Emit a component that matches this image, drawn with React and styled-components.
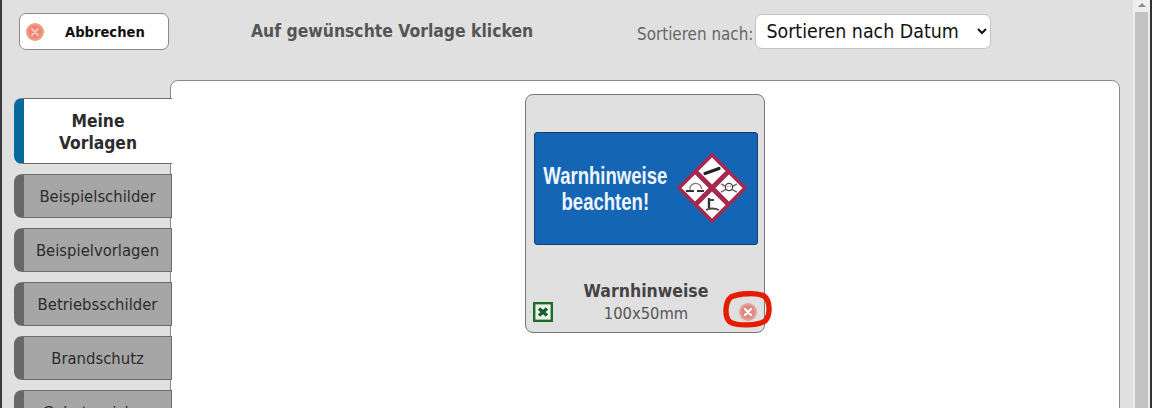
import React from "react";
import styled, { createGlobalStyle } from "styled-components";

const GlobalStyle = createGlobalStyle`
    html, body {
        margin: 0;
        height: 408px;
        overflow: hidden;
        background: #e0e0e0;
    }
    * {
        box-sizing: border-box;
    }
`;

const font = `"DejaVu Sans Condensed", "DejaVu Sans", sans-serif`;

const Window = styled.div`
    display: flex;
    width: 1152px;
    height: 408px;
    overflow: hidden;
    border-left: 2px solid #3a3a3a;
    border-right: 2px solid #2c3238;
    background: #e0e0e0;
    font-family: ${font};
`;

const Main = styled.div`
    flex: 1;
    min-width: 0;
    padding: 13px 0 0 12px;
`;

const Toolbar = styled.div`
    display: flex;
    align-items: flex-start;
    height: 67px;
`;

const CancelButton = styled.button`
    display: flex;
    align-items: center;
    width: 150px;
    height: 37px;
    margin-left: 5px;
    padding: 0 0 0 5px;
    background: #fff;
    border: 1px solid #8a8a8a;
    border-radius: 7px;
    color: #111;
    font-family: ${font};
    font-size: 14.6px;
    font-weight: 700;
`;

const CancelLabel = styled.span`
    margin-left: 20px;
`;

const Title = styled.div`
    margin: 8px 0 0 82px;
    width: 386px;
    color: #555;
    font-size: 17.4px;
    font-weight: 700;
`;

const SortLabel = styled.label`
    margin-top: 11px;
    color: #666;
    font-size: 16.9px;
`;

const SortSelect = styled.select`
    width: 236px;
    height: 35px;
    margin: 1px 0 0 2px;
    padding: 0 0 0 6px;
    background: #fff;
    border: 1px solid #c4c4c4;
    border-radius: 7px;
    color: #111;
    font-family: ${font};
    font-size: 19.4px;
`;

const Content = styled.div`
    display: flex;
    align-items: flex-start;
`;

const Tabs = styled.div`
    position: relative;
    z-index: 1;
    display: flex;
    flex-direction: column;
    gap: 10px;
    width: 158px;
    margin-right: -2px;
    padding-top: 18px;
    flex-shrink: 0;
`;

const Tab = styled.div`
    display: flex;
    align-items: center;
    justify-content: center;
    height: ${(p) => (p.$active ? "66px" : "44px")};
    padding: 2px 6px 0;
    background: ${(p) => (p.$active ? "#fff" : "#a6a6a6")};
    border: 1px solid #6c6c6c;
    border-left: 10px solid ${(p) => (p.$active ? "#06699c" : "#686868")};
    border-right: ${(p) => (p.$active ? "none" : "1px solid #6c6c6c")};
    border-radius: 8px 0 0 8px;
    color: #2c2c2c;
    font-size: ${(p) => (p.$active ? "17.3px" : "16.5px")};
    font-weight: ${(p) => (p.$active ? 700 : 400)};
    line-height: 22px;
    text-align: center;
    flex-shrink: 0;
`;

const Panel = styled.div`
    display: flex;
    justify-content: center;
    align-items: flex-start;
    width: 950px;
    height: 400px;
    padding-top: 13px;
    background: #fff;
    border: 1px solid #8a8a8a;
    border-radius: 8px 8px 0 0;
`;

const Card = styled.div`
    position: relative;
    display: flex;
    flex-direction: column;
    align-items: center;
    width: 240px;
    height: 239px;
    padding: 37px 6px 0 8px;
    background: #e0e0e0;
    border: 1px solid #777;
    border-radius: 8px;
`;

const Sign = styled.div`
    display: flex;
    align-items: center;
    width: 224px;
    height: 113px;
    padding: 0 0 2px 7px;
    background: #1565b5;
    border: 1px solid #123f70;
    border-radius: 3px;
`;

const SignText = styled.div`
    width: 164px;
    margin-right: -33px;
    padding-top: 2px;
    color: #eef6fb;
    font-family: "Liberation Sans", sans-serif;
    font-size: 24px;
    font-weight: 700;
    line-height: 26px;
    text-align: center;
    white-space: nowrap;
    transform: scaleX(0.772);
    transform-origin: left center;
`;

const Hazards = styled.svg`
    margin-left: 4px;
    flex-shrink: 0;
`;

const CardName = styled.div`
    margin-top: 36px;
    color: #444;
    font-size: 17.5px;
    font-weight: 700;
    line-height: 20px;
`;

const CardSize = styled.div`
    margin-top: 2px;
    color: #555;
    font-size: 16.4px;
    line-height: 22px;
`;

const ExcelBadge = styled.svg`
    position: absolute;
    left: 7px;
    bottom: 10px;
`;

const RemoveMark = styled.svg`
    position: absolute;
    right: -9px;
    bottom: 3px;
`;

const Scrollbar = styled.div`
    display: flex;
    flex-direction: column;
    align-items: center;
    width: 17px;
    flex-shrink: 0;
    background: #eeeeee;
`;

const ScrollArrow = styled.div`
    height: 12px;
    padding-top: 3px;
    &::before {
        content: "";
        display: block;
        border-left: 4px solid transparent;
        border-right: 4px solid transparent;
        border-bottom: 4px solid #8e8e8e;
    }
`;

const ScrollThumb = styled.div`
    width: 13px;
    flex: 1;
    background: #c2c2c2;
`;

const CancelIcon = () => (
    <svg width="20" height="20" viewBox="0 0 20 20">
        <circle cx="10" cy="10" r="9" fill="#f09a88" />
        <circle cx="10" cy="10" r="6.5" fill="#ec8472" />
        <path d="M7 7l6 6M13 7l-6 6" stroke="#f7c4ba" strokeWidth="2" strokeLinecap="round" />
    </svg>
);

const Diamond = ({ x, y, children }) => (
    <g transform={`translate(${x} ${y})`}>
        <path d="M0 -16L16 0L0 16L-16 0Z" fill="#fff" stroke="#a8274d" strokeWidth="3.4" strokeLinejoin="round" />
        {children}
    </g>
);

const tabs = ["Beispielschilder", "Beispielvorlagen", "Betriebsschilder", "Brandschutz", "Gebotszeichen"];

const App = () => {
    return (
        <>
            <GlobalStyle />
            <Window>
                <Main>
                    <Toolbar>
                        <CancelButton>
                            <CancelIcon />
                            <CancelLabel>Abbrechen</CancelLabel>
                        </CancelButton>
                        <Title>Auf gewünschte Vorlage klicken</Title>
                        <SortLabel>Sortieren nach:</SortLabel>
                        <SortSelect defaultValue="datum">
                            <option value="datum">Sortieren nach Datum</option>
                        </SortSelect>
                    </Toolbar>
                    <Content>
                        <Tabs>
                            <Tab $active>Meine<br />Vorlagen</Tab>
                            {tabs.map((t) => (
                                <Tab key={t}>{t}</Tab>
                            ))}
                        </Tabs>
                        <Panel>
                            <Card>
                                <Sign>
                                    <SignText>Warnhinweise<br />beachten!</SignText>
                                    <Hazards width="70" height="70" viewBox="-35 -35 70 70">
                                        <Diamond x={0} y={-17}>
                                            <path d="M-7 2.5L7 -2.5" stroke="#222" strokeWidth="3.2" strokeLinecap="round" />
                                        </Diamond>
                                        <Diamond x={17} y={0}>
                                            <path d="M-8 -4L8 4M8 -4L-8 4" stroke="#777" strokeWidth="1.4" />
                                            <circle cx="0" cy="-1" r="3.6" fill="#fff" stroke="#444" strokeWidth="1.2" />
                                            <path d="M-1.5 -1.5h.8M.8 -1.5h.8" stroke="#333" strokeWidth="1.1" />
                                        </Diamond>
                                        <Diamond x={0} y={17}>
                                            <path d="M-3 -7V3" stroke="#333" strokeWidth="2.4" />
                                            <path d="M-3 -5H2M-6 5Q0 2 7 5" fill="none" stroke="#444" strokeWidth="1.8" />
                                        </Diamond>
                                        <Diamond x={-17} y={0}>
                                            <path d="M-9 3H-1M2 3H9" stroke="#333" strokeWidth="1.8" />
                                            <path d="M-5 2V-1Q-1 -7 5 -3L7 1" fill="none" stroke="#777" strokeWidth="1.3" />
                                        </Diamond>
                                    </Hazards>
                                </Sign>
                                <CardName>Warnhinweise</CardName>
                                <CardSize>100x50mm</CardSize>
                                <ExcelBadge width="20" height="20" viewBox="0 0 20 20">
                                    <rect x="1.2" y="1.2" width="17.6" height="17.6" fill="#eef4ea" stroke="#1b6b2c" strokeWidth="2.4" />
                                    <path d="M6 6.5l8 7M14 6.5l-8 7" stroke="#14602a" strokeWidth="3.4" />
                                </ExcelBadge>
                                <RemoveMark width="50" height="38" viewBox="0 0 50 38">
                                    <circle cx="25" cy="21" r="9" fill="#dba49e" />
                                    <circle cx="25" cy="21" r="6.8" fill="#e58479" />
                                    <path d="M22 18l6 6M28 18l-6 6" stroke="#fff" strokeWidth="2.4" strokeLinecap="round" />
                                    <path d="M8 6C16 2 34 1.5 41 5C47 9 48 24 42 30C34 35 14 35 7 31C1 26 2 11 8 6Z" fill="none" stroke="#e61c00" strokeWidth="5.4" />
                                </RemoveMark>
                            </Card>
                        </Panel>
                    </Content>
                </Main>
                <Scrollbar>
                    <ScrollArrow />
                    <ScrollThumb />
                </Scrollbar>
            </Window>
        </>
    );
};

export default App;
